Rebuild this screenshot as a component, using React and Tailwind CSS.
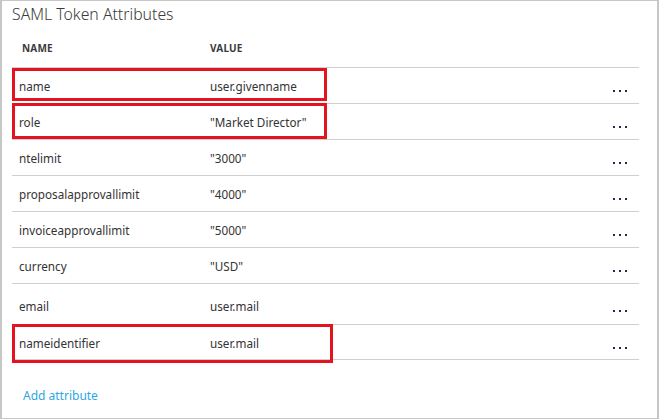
const rows = [
  { name: 'name', value: 'user.givenname', box: 'top-0 h-[33px] w-[315px]' },
  { name: 'role', value: '"Market Director"', box: '-top-px h-[36px] w-[315px]' },
  { name: 'ntelimit', value: '"3000"' },
  { name: 'proposalapprovallimit', value: '"4000"' },
  { name: 'invoiceapprovallimit', value: '"5000"' },
  { name: 'currency', value: '"USD"' },
  { name: 'email', value: 'user.mail', tall: true },
  { name: 'nameidentifier', value: 'user.mail', box: '-top-px h-[39px] w-[321px]' },
];

function Dots() {
  return (
    <div className="flex gap-[4px] pr-[12px] pt-[8px]">
      <span className="h-[2px] w-[2px] bg-[#1a2a4a]" />
      <span className="h-[2px] w-[2px] bg-[#1a2a4a]" />
      <span className="h-[2px] w-[2px] bg-[#1a2a4a]" />
    </div>
  );
}

export default function App() {
  return (
    <div
      className="h-[419px] w-[659px] border-t border-b border-l-2 border-r-2 border-[#c6c6c6] bg-white text-[#333]"
      style={{ fontFamily: '"Noto Sans", "Open Sans", sans-serif' }}
    >
      <div className="flex h-[28px] items-center pl-[10px] text-[15.8px] font-light text-[#3a3a3a]">
        SAML Token Attributes
      </div>
      <div className="ml-[10px] w-[627px]">
        <div className="flex h-[38px] items-center text-[10px] font-bold tracking-[0.2px] text-[#3a3a3a]">
          <div className="w-[198px] pl-[10px]">NAME</div>
          <div>VALUE</div>
        </div>
        {rows.map((r) => (
          <div
            key={r.name}
            className={`relative flex items-center border-t border-[#cfcfcf] text-[11.7px] ${r.tall ? 'h-[41px] pt-[6px]' : 'h-[36px] pt-[3px]'} ${r.name === 'nameidentifier' ? 'border-b' : ''}`}
          >
            <div className="w-[198px] pl-[7px]">{r.name}</div>
            <div>{r.value}</div>
            <div className="ml-auto">
              <Dots />
            </div>
            {r.box && (
              <div className={`absolute left-0 border-[3px] border-[#e3141f] ${r.box}`} />
            )}
          </div>
        ))}
        <div className="pl-[11px] pt-[27px] text-[12px] text-[#2ea6e6]">Add attribute</div>
      </div>
    </div>
  );
}
